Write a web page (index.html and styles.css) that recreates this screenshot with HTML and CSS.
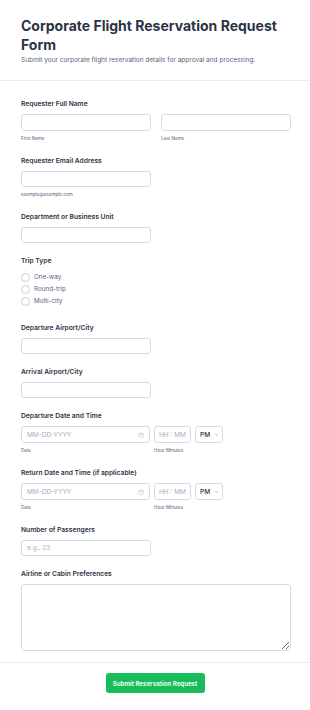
FILE: index.html
```html
<!DOCTYPE html>
<html lang="en">
<head>
    <meta charset="UTF-8">
    <meta name="viewport" content="width=device-width, initial-scale=1.0">
    <title>Corporate Flight Reservation Request Form</title>
    <link rel="stylesheet" href="styles.css">
</head>
<body>
    <header class="form-header">
        <h1>Corporate Flight Reservation Request Form</h1>
        <p>Submit your corporate flight reservation details for approval and processing.</p>
    </header>

    <form class="form-body">
        <!-- Name -->
        <div class="field">
            <label class="field-label">Requester Full Name</label>
            <div class="name-row">
                <div class="sub-field">
                    <input type="text" class="text-input">
                    <span class="sub-label">First Name</span>
                </div>
                <div class="sub-field">
                    <input type="text" class="text-input">
                    <span class="sub-label">Last Name</span>
                </div>
            </div>
        </div>

        <div class="field">
            <label class="field-label">Requester Email Address</label>
            <input type="email" class="text-input short">
            <span class="sub-label">example@example.com</span>
        </div>

        <div class="field">
            <label class="field-label">Department or Business Unit</label>
            <input type="text" class="text-input short">
        </div>

        <!-- Trip type -->
        <div class="field">
            <label class="field-label">Trip Type</label>
            <div class="radio-list">
                <label class="radio-row"><span class="radio"></span>One-way</label>
                <label class="radio-row"><span class="radio"></span>Round-trip</label>
                <label class="radio-row"><span class="radio"></span>Multi-city</label>
            </div>
        </div>

        <div class="field">
            <label class="field-label">Departure Airport/City</label>
            <input type="text" class="text-input short">
        </div>

        <div class="field">
            <label class="field-label">Arrival Airport/City</label>
            <input type="text" class="text-input short">
        </div>

        <!-- Date + time -->
        <div class="field">
            <label class="field-label">Departure Date and Time</label>
            <div class="datetime-row">
                <div class="sub-field">
                    <div class="date-box">
                        <span class="placeholder">MM-DD-YYYY</span>
                        <svg class="cal-icon" width="6" height="6" viewBox="0 0 12 12" fill="none" stroke="#c3cad8" stroke-width="1.2"><rect x="1.5" y="2.5" width="9" height="8" rx="1.5"/><path d="M1.5 5h9M4 1v2.5M8 1v2.5"/></svg>
                    </div>
                    <span class="sub-label">Date</span>
                </div>
                <div class="sub-field">
                    <div class="time-box"><span class="placeholder">HH : MM</span></div>
                    <span class="sub-label">Hour Minutes</span>
                </div>
                <div class="sub-field">
                    <div class="ampm-box">PM <svg width="5" height="4" viewBox="0 0 10 6" fill="none" stroke="#2c3345" stroke-width="1.5"><path d="M1.5 1l3.5 3.5L8.5 1"/></svg></div>
                </div>
            </div>
        </div>

        <div class="field">
            <label class="field-label">Return Date and Time (if applicable)</label>
            <div class="datetime-row">
                <div class="sub-field">
                    <div class="date-box">
                        <span class="placeholder">MM-DD-YYYY</span>
                        <svg class="cal-icon" width="6" height="6" viewBox="0 0 12 12" fill="none" stroke="#c3cad8" stroke-width="1.2"><rect x="1.5" y="2.5" width="9" height="8" rx="1.5"/><path d="M1.5 5h9M4 1v2.5M8 1v2.5"/></svg>
                    </div>
                    <span class="sub-label">Date</span>
                </div>
                <div class="sub-field">
                    <div class="time-box"><span class="placeholder">HH : MM</span></div>
                    <span class="sub-label">Hour Minutes</span>
                </div>
                <div class="sub-field">
                    <div class="ampm-box">PM <svg width="5" height="4" viewBox="0 0 10 6" fill="none" stroke="#2c3345" stroke-width="1.5"><path d="M1.5 1l3.5 3.5L8.5 1"/></svg></div>
                </div>
            </div>
        </div>

        <div class="field">
            <label class="field-label">Number of Passengers</label>
            <input type="text" class="text-input short" placeholder="e.g., 23">
        </div>

        <div class="field last">
            <label class="field-label">Airline or Cabin Preferences</label>
            <textarea class="text-area"></textarea>
        </div>
    </form>

    <div class="form-footer">
        <button type="button" class="submit-btn">Submit Reservation Request</button>
    </div>
</body>
</html>
```

FILE: styles.css
```css
body {
    font-family: Inter, "Noto Sans", sans-serif;
    margin: 0;
    padding: 0;
    background-color: #fff;
    color: #2c3345;
}

.form-header {
    padding: 16px 21px 15px;
    border-bottom: 1px solid #eaecf1;
}

.form-header h1 {
    margin: 0;
    font-size: 14px;
    line-height: 19px;
    font-weight: 700;
}

.form-header p {
    margin: 2px 0 0;
    font-size: 6.5px;
    line-height: 9px;
    color: #57647e;
}

.form-body {
    padding: 18px 19px 11px 21px;
}

.field {
    margin-bottom: 13px;
}

.field.last {
    margin-bottom: 0;
}

.field-label {
    display: block;
    font-size: 6.7px;
    line-height: 10px;
    font-weight: 600;
    margin-bottom: 5px;
}

.text-input, .date-box, .time-box, .ampm-box {
    display: block;
    box-sizing: border-box;
    height: 17px;
    border: 1px solid #d6dbe5;
    border-radius: 3px;
    background: #fff;
    font-family: inherit;
    font-size: 6.5px;
    padding: 0 5px;
    margin: 0;
    width: 100%;
}

.text-input.short {
    width: 130px;
    height: 16px;
}

.text-input::placeholder {
    color: #a6aec0;
}

.name-row {
    display: grid;
    grid-template-columns: 1fr 1fr;
    gap: 10px;
}

.sub-label {
    display: block;
    font-size: 4.6px;
    line-height: 8px;
    margin-top: 4px;
    color: #57647e;
    white-space: nowrap;
}

.radio-list {
    padding: 0 0 3px;
}

.radio-row {
    display: flex;
    align-items: center;
    height: 12px;
    font-size: 6.3px;
    color: #57647e;
}

.radio {
    width: 7px;
    height: 7px;
    border: 1px solid #c8cfdb;
    border-radius: 50%;
    margin-right: 4px;
}

.datetime-row {
    display: flex;
    gap: 4px;
}

.date-box, .time-box, .ampm-box {
    display: flex;
    align-items: center;
    height: 17px;
    white-space: nowrap;
}

.datetime-row .sub-field:first-child {
    width: 129px;
}

.datetime-row .sub-field:nth-child(2) {
    width: 37px;
}

.datetime-row .sub-field:nth-child(3) {
    width: 28px;
}

.date-box {
    justify-content: space-between;
}

.time-box {
    justify-content: center;
    padding: 0 2px;
}

.ampm-box {
    font-weight: 500;
    font-size: 6.5px;
    gap: 5px;
    padding: 0 4px;
}

.placeholder {
    color: #a6aec0;
}

.text-area {
    display: block;
    box-sizing: border-box;
    width: 100%;
    height: 67px;
    border: 1px solid #d6dbe5;
    border-radius: 3px;
    margin: 0;
    resize: vertical;
}

.form-footer {
    display: flex;
    justify-content: center;
    border-top: 1px solid #eaecf1;
    padding: 10px 0 11px;
}

.submit-btn {
    background-color: #18bd5b;
    color: #fff;
    border: none;
    border-radius: 3px;
    width: 99px;
    height: 20px;
    font-family: inherit;
    font-size: 6.2px;
    font-weight: 600;
    cursor: pointer;
}
```
